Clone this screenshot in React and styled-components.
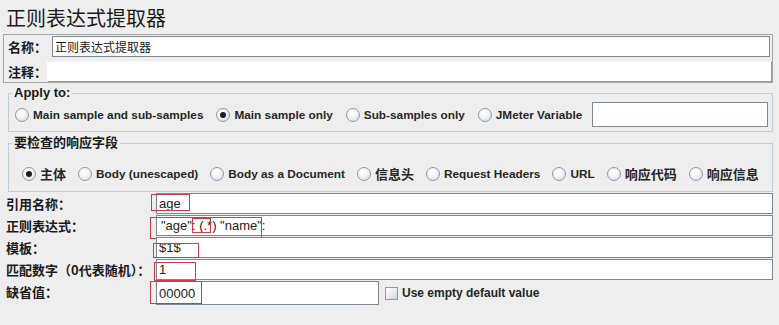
import React from "react";
import styled, { createGlobalStyle, css } from "styled-components";

const Global = createGlobalStyle`
  html, body { margin: 0; padding: 0; background: #eeeeee; }
  body {
    font-family: "Liberation Sans", "Noto Sans CJK SC", sans-serif;
    color: #1a1a1a;
    width: 779px;
    height: 325px;
    overflow: hidden;
  }
`;

const Page = styled.div`
  display: flex;
  flex-direction: column;
  width: 779px;
  height: 325px;
  background: #eeeeee;
`;

const Title = styled.div`
  font-family: "Noto Sans CJK SC", sans-serif;
  font-size: 20px;
  line-height: 20px;
  padding: 8px 0 0 6px;
  height: 26px;
`;

const NameBox = styled.div`
  margin: 0 6px 0 3px;
  border: 1px solid #a5a5a5;
  padding: 1px 0 0 0;
  display: flex;
  flex-direction: column;
  gap: 4px;
`;

const NameRow = styled.div`
  display: flex;
  align-items: center;
  height: ${(p) => p.$h}px;
`;

const RowLabel = styled.div`
  font-family: "Noto Sans CJK SC", sans-serif;
  font-weight: 700;
  font-size: 13px;
  width: ${(p) => p.$w}px;
  padding-left: 4px;
  box-sizing: border-box;
  white-space: nowrap;
`;

const TextField = styled.div`
  flex: 1;
  height: 100%;
  box-sizing: border-box;
  background: #ffffff;
  border: 1px solid #7d8791;
  font-family: "Noto Sans CJK SC", sans-serif;
  font-size: 12px;
  display: flex;
  align-items: center;
  padding-left: 2px;
  ${(p) =>
    p.$soft &&
    css`
      border-color: #f2f2f2 #9a9a9a #9a9a9a #ffffff;
    `}
`;

const Group = styled.fieldset`
  margin: ${(p) => p.$m};
  border: 1px solid #c3cbd3;
  border-radius: 0;
  padding: ${(p) => p.$pad};
  min-width: 0;
  height: ${(p) => p.$h}px;
  box-sizing: border-box;
`;

const Legend = styled.legend`
  font-family: "Liberation Sans", "Noto Sans CJK SC", sans-serif;
  font-weight: 700;
  font-size: 13px;
  line-height: 14px;
  padding: 0 2px;
  margin-left: 3px;
  color: #1a1a1a;
`;

const RadioRow = styled.div`
  display: flex;
  align-items: center;
  gap: ${(p) => p.$gap}px;
  padding-left: ${(p) => p.$pl}px;
`;

const RadioItem = styled.label`
  display: flex;
  align-items: center;
  gap: 4px;
  font-family: "Liberation Sans", "Noto Sans CJK SC", sans-serif;
  font-weight: 700;
  font-size: ${(p) => (p.$cjk ? 13 : 11.8)}px;
  color: #262626;
  white-space: nowrap;
`;

const RadioDot = styled.span`
  width: 12px;
  height: 12px;
  border-radius: 50%;
  border: 1px solid #8e99a5;
  background: radial-gradient(circle at 40% 35%, #ffffff 0%, #f3f5f8 40%, #cfd6de 100%);
  display: flex;
  align-items: center;
  justify-content: center;
  flex: none;
  &::after {
    content: "";
    width: 6px;
    height: 6px;
    border-radius: 50%;
    background: ${(p) => (p.$on ? "#1c1c1c" : "transparent")};
  }
`;

const VarField = styled.div`
  width: 176px;
  height: 25px;
  box-sizing: border-box;
  background: #fff;
  border: 1px solid #7d8791;
  margin-left: -3px;
`;

const Form = styled.div`
  display: grid;
  grid-template-columns: 156px 1fr;
  row-gap: 1px;
  margin: 1px 6px 0 0;
`;

const FormLabel = styled.div`
  font-family: "Noto Sans CJK SC", sans-serif;
  font-weight: 700;
  font-size: 13px;
  padding-left: 6px;
  display: flex;
  align-items: ${(p) => (p.$top ? "flex-start" : "center")};
  padding-top: ${(p) => (p.$top ? 1 : 0)}px;
  white-space: nowrap;
  height: ${(p) => p.$h}px;
`;

const FieldWrap = styled.div`
  position: relative;
  display: flex;
  align-items: center;
  height: ${(p) => p.$h}px;
`;

const FormField = styled.div`
  position: relative;
  height: 100%;
  width: ${(p) => (p.$w ? `${p.$w}px` : "100%")};
  box-sizing: border-box;
  background: #fff;
  border: 1px solid #7d8791;
  font-family: "Liberation Sans", sans-serif;
  font-size: 13px;
  color: #222;
  display: flex;
  align-items: center;
  padding-left: ${(p) => p.$pl ?? 2}px;
  white-space: pre;
`;

const Mark = styled.span`
  position: absolute;
  border: 1px solid #d23a48;
  box-sizing: border-box;
  pointer-events: none;
`;

const CheckBox = styled.span`
  width: 13px;
  height: 13px;
  box-sizing: border-box;
  border: 1px solid #8e99a5;
  background: linear-gradient(135deg, #ffffff 0%, #e8ecf1 50%, #c9d1da 100%);
  margin-left: 6px;
  flex: none;
`;

const CheckLabel = styled.span`
  font-family: "Liberation Sans", sans-serif;
  font-weight: 700;
  font-size: 12px;
  color: #262626;
  margin-left: 4px;
`;

const applyOpts = [
  ["Main sample and sub-samples", false],
  ["Main sample only", true],
  ["Sub-samples only", false],
  ["JMeter Variable", false],
];

const fieldOpts = [
  ["主体", true, true],
  ["Body (unescaped)", false, false],
  ["Body as a Document", false, false],
  ["信息头", false, true],
  ["Request Headers", false, false],
  ["URL", false, false],
  ["响应代码", false, true],
  ["响应信息", false, true],
];

const markStyle = (l, t, w, h) => ({ left: l, top: t, width: w, height: h });

export default function App() {
  return (
    <Page>
      <Global />
      <Title>正则表达式提取器</Title>
      <NameBox>
        <NameRow $h={21}>
          <RowLabel $w={48}>名称：</RowLabel>
          <TextField style={{ marginRight: 2 }}>正则表达式提取器</TextField>
        </NameRow>
        <NameRow $h={21}>
          <RowLabel $w={43}>注释：</RowLabel>
          <TextField $soft />
        </NameRow>
      </NameBox>

      <Group $m="3px 6px 0 8px" $pad="2px 0 0 0" $h={46}>
        <Legend>Apply to:</Legend>
        <RadioRow $gap={13} $pl={6}>
          {applyOpts.map(([t, on]) => (
            <RadioItem key={t}>
              <RadioDot $on={on} />
              {t}
            </RadioItem>
          ))}
          <VarField />
        </RadioRow>
      </Group>

      <Group $m="4px 6px 0 8px" $pad="14px 0 0 0" $h={56}>
        <Legend>要检查的响应字段</Legend>
        <RadioRow $gap={12} $pl={13}>
          {fieldOpts.map(([t, on, cjk]) => (
            <RadioItem key={t} $cjk={cjk}>
              <RadioDot $on={on} />
              {t}
            </RadioItem>
          ))}
        </RadioRow>
      </Group>

      <Form>
        <FormLabel $h={21}>引用名称：</FormLabel>
        <FieldWrap $h={21}>
          <FormField>age</FormField>
          <Mark style={markStyle(-5, 1, 39, 17)} />
        </FieldWrap>

        <FormLabel $h={21}>正则表达式：</FormLabel>
        <FieldWrap $h={21}>
          <FormField $pl={4}>{'"age": (.*) "name":'}</FormField>
          <Mark style={markStyle(-6, 2, 112, 22)} />
          <Mark style={markStyle(36, 3, 19, 15)} />
        </FieldWrap>

        <FormLabel $h={21}>模板：</FormLabel>
        <FieldWrap $h={21}>
          <FormField>$1$</FormField>
          <Mark style={markStyle(-3, 6, 46, 15)} />
        </FieldWrap>

        <FormLabel $h={21}>匹配数字（0代表随机）：</FormLabel>
        <FieldWrap $h={21}>
          <FormField>1</FormField>
          <Mark style={markStyle(-2, 3, 42, 19)} />
        </FieldWrap>

        <FormLabel $h={24} $top>缺省值：</FormLabel>
        <FieldWrap $h={24}>
          <FormField $w={223}>00000</FormField>
          <Mark style={markStyle(-6, 0, 52, 23)} />
          <CheckBox />
          <CheckLabel>Use empty default value</CheckLabel>
        </FieldWrap>
      </Form>
    </Page>
  );
}
